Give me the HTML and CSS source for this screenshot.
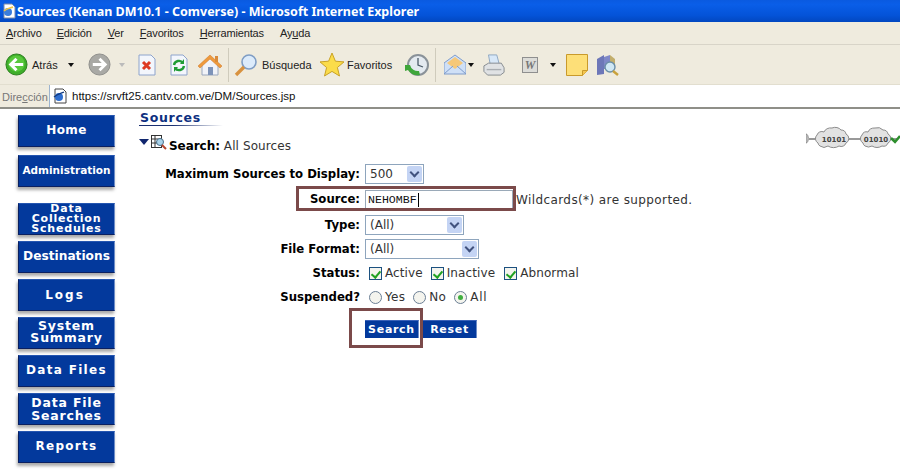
FILE: index.html
```html
<!DOCTYPE html>
<html lang="es">
<head>
<meta charset="utf-8">
<title>Sources (Kenan DM10.1 - Comverse) - Microsoft Internet Explorer</title>
<link rel="stylesheet" href="styles.css">
</head>
<body>
<header class="titlebar">
  <svg class="title-icon" viewBox="0 0 16 16" width="16" height="16"><path d="M3 1h8l3 3v11H3z" fill="#fff" stroke="#7d8ba8"/><circle cx="7" cy="9" r="4" fill="#3b7ddb"/><path d="M3 8c3-3 7-3 9-4" stroke="#f4c542" fill="none" stroke-width="1.4"/></svg>
  <span>Sources (Kenan DM10.1 - Comverse) - Microsoft Internet Explorer</span>
</header>
<nav class="menubar">
  <span class="menu m1"><u>A</u>rchivo</span>
  <span class="menu m2"><u>E</u>dición</span>
  <span class="menu"><u>V</u>er</span>
  <span class="menu"><u>F</u>avoritos</span>
  <span class="menu"><u>H</u>erramientas</span>
  <span class="menu">Ay<u>u</u>da</span>
</nav>
<div class="toolbar">
  <svg class="ti s23" viewBox="0 0 24 24"><circle cx="12" cy="12" r="11" fill="#3fae2a" stroke="#2a7d1c"/><circle cx="12" cy="11" r="8.5" fill="#58c83c"/><path d="M19 12H8M12 6l-6 6 6 6" fill="none" stroke="#fff" stroke-width="3.2"/></svg>
  <span class="tl l-back">Atrás</span>
  <i class="caret c-back"></i>
  <svg class="ti s23 fwd" viewBox="0 0 24 24"><circle cx="12" cy="12" r="11" fill="#a9a9a5" stroke="#8d8d8a"/><path d="M5 12h11M12 6l6 6-6 6" fill="none" stroke="#fff" stroke-width="3"/></svg>
  <i class="caret c-fwd"></i>
  <svg class="ti s20 stop" viewBox="0 0 20 22"><path d="M2 1h12l4 4v16H2z" fill="#f3f6fc" stroke="#8ea4cc"/><path d="M6 8l7 7M13 8l-7 7" stroke="#dd3a22" stroke-width="3"/></svg>
  <svg class="ti s20 refresh" viewBox="0 0 20 22"><path d="M2 1h12l4 4v16H2z" fill="#f3f6fc" stroke="#8ea4cc"/><path d="M5 11a5 5 0 0 1 9-2M15 12a5 5 0 0 1-9 2" fill="none" stroke="#1f9c35" stroke-width="2.4"/><path d="M15 5v5h-4zM5 18v-5h4z" fill="#1f9c35"/></svg>
  <svg class="ti s24 home" viewBox="0 0 24 24"><path d="M4 11v11h16V11L12 4z" fill="#f1f3f8" stroke="#9aa7bd"/><path d="M0 13L12 2l12 11-2 2L12 6 2 15z" fill="#ef9a3c" stroke="#c9762a" stroke-width=".5"/><rect x="10" y="14" width="5" height="8" fill="#7d93b8"/><rect x="17" y="3" width="3" height="6" fill="#d98a3a"/></svg>
  <i class="sep s1"></i>
  <svg class="ti s24 search" viewBox="0 0 24 24"><circle cx="15" cy="9" r="7" fill="#dcebfb" stroke="#7f9dc4" stroke-width="1.6"/><path d="M10 14L2 22" stroke="#d8923f" stroke-width="3.4"/></svg>
  <span class="tl l-search">Búsqueda</span>
  <svg class="ti s24 star" viewBox="0 0 24 24"><path d="M12 0l3.4 8.2 8.6.7-6.6 5.6 2.1 8.5L12 18.4 4.5 23l2.1-8.5L0 8.9l8.6-.7z" fill="#fbdc4a" stroke="#c9a227"/></svg>
  <span class="tl l-fav">Favoritos</span>
  <svg class="ti s24 hist" viewBox="0 0 24 24"><circle cx="13" cy="12" r="10" fill="#e4eaf0" stroke="#8a9299" stroke-width="2"/><path d="M13 5v7l5 2" fill="none" stroke="#4a5a68" stroke-width="1.3"/><path d="M0 12h5a8 8 0 0 0 9 6l1 4A12 12 0 0 1 3 17l-3 1z" fill="#3fa63a"/></svg>
  <i class="sep s2"></i>
  <svg class="ti s22 mail" viewBox="0 0 22 22"><path d="M0 9l11-8 11 8v11H0z" fill="#cfe0f7" stroke="#7e9cca"/><path d="M3 9l8-6 8 6-8 6z" fill="#f6c878"/><path d="M0 20l9-8M22 20l-9-8" stroke="#7e9cca"/></svg>
  <i class="caret c-mail"></i>
  <svg class="ti s22 print" viewBox="0 0 24 24"><path d="M6 1h9l3 11H8z" fill="#d8e8f8" stroke="#8aa3bf"/><path d="M1 13l5-3h14l3 5v5l-4 3H5l-4-4z" fill="#e0e2e4" stroke="#80858b"/><path d="M4 17h16" stroke="#a9adb2" stroke-width="1.5"/></svg>
  <span class="word">W</span>
  <i class="caret c-word"></i>
  <svg class="ti s22 note" viewBox="0 0 22 22"><path d="M.5.5h21v16l-5 5H.5z" fill="#fddf78" stroke="#c99a2c"/><path d="M16.5 21.5v-5h5" fill="#f4c650" stroke="#c99a2c"/></svg>
  <svg class="ti s22 research" viewBox="0 0 22 22"><path d="M0 5l7-4v19l-7 1z" fill="#6d77b8"/><path d="M7 3l6-2v14H7z" fill="#7f88c8"/><path d="M13 1l5 4v8h-5z" fill="#c2ae6c"/><circle cx="13" cy="13" r="5" fill="#cfe7f4" stroke="#6a8ea8" stroke-width="1.4"/><path d="M16 17l5 4" stroke="#c9a23c" stroke-width="2.4"/></svg>
</div>
<div class="addressbar">
  <span class="addr-label">Dire<u>c</u>ción</span>
  <div class="addr-field">
    <svg class="addr-icon" viewBox="0 0 16 16" width="16" height="16"><path d="M3 1h8l3 3v11H3z" fill="#fff" stroke="#444"/><circle cx="7" cy="9" r="4" fill="#2f6fd0"/><path d="M2 9c3-3 8-4 10-5" stroke="#123a80" fill="none" stroke-width="1.2"/></svg>
    <span>https://srvft25.cantv.com.ve/DM/Sources.jsp</span>
  </div>
</div>
<main class="page">
  <aside class="sidebar">
    <a class="nav n-home">Home</a>
    <a class="nav n-admin">Administration</a>
    <a class="nav triple">Data<br>Collection<br>Schedules</a>
    <a class="nav n-dest">Destinations</a>
    <a class="nav wide n-logs">Logs</a>
    <a class="nav double n-sys">System<br>Summary</a>
    <a class="nav wide">Data Files</a>
    <a class="nav double">Data File<br>Searches</a>
    <a class="nav wide">Reports</a>
  </aside>
  <section class="content">
    <h1 class="heading">Sources</h1>
    <div class="search-head">
      <i class="tri"></i>
      <svg class="search-icon" viewBox="0 0 17 17" width="17" height="17"><rect x="1.5" y="1.5" width="10" height="12" fill="#fff" stroke="#333"/><path d="M1.5 5h10M1.5 9h10M5 1.5v12" stroke="#333"/><circle cx="10" cy="8" r="3.5" fill="#a9d3ea" stroke="#4a6f8a"/><path d="M12 11l4 4" stroke="#b5452e" stroke-width="2"/></svg>
      <b>Search:</b><span>&nbsp;All Sources</span>
    </div>
    <form class="form">
      <label class="lbl">Maximum Sources to Display:</label>
      <div class="field"><span class="select w-max"><span>500</span><i class="sel-btn"></i></span></div>
      <label class="lbl">Source:</label>
      <div class="field"><span class="input">NEHOMBF<i class="cursor"></i></span><span class="hint">Wildcards(*) are supported.</span></div>
      <label class="lbl">Type:</label>
      <div class="field"><span class="select w-type"><span>(All)</span><i class="sel-btn"></i></span></div>
      <label class="lbl">File Format:</label>
      <div class="field"><span class="select w-fmt"><span>(All)</span><i class="sel-btn"></i></span></div>
      <label class="lbl">Status:</label>
      <div class="field opts">
        <span class="chk"></span><span class="opt o1">Active</span>
        <span class="chk"></span><span class="opt o2">Inactive</span>
        <span class="chk"></span><span class="opt">Abnormal</span>
      </div>
      <label class="lbl">Suspended?</label>
      <div class="field opts">
        <span class="rad"></span><span class="opt o3">Yes</span>
        <span class="rad"></span><span class="opt o4">No</span>
        <span class="rad on"></span><span class="opt o5">All</span>
      </div>
      <div></div>
      <div class="buttons"><a class="btn">Search</a><a class="btn">Reset</a></div>
    </form>
    <div class="hl hl-source"></div>
    <div class="hl hl-search"></div>
    <div class="clouds">
      <svg viewBox="0 0 94 26" width="94" height="26">
        <path d="M3 14h88" stroke="#777" stroke-width="1.5"/>
        <path d="M0 9c3 0 3 9 0 9z" fill="#ccc" stroke="#888"/>
        <path d="M12 18a5 5 0 0 1-1-8 5 5 0 0 1 7-3 7 6 0 0 1 8-4 7 6 0 0 1 9 2 5 5 0 0 1 5 4 5 5 0 0 1 0 9 5 5 0 0 1-7 3 8 6 0 0 1-11 0 6 5 0 0 1-8 0 4 4 0 0 1-2-3z" fill="#e2e2e2" stroke="#8c8c8c"/>
        <path d="M57 18a5 5 0 0 1-1-8 5 5 0 0 1 6-3 7 6 0 0 1 7-4 7 6 0 0 1 8 2 5 5 0 0 1 5 4 5 5 0 0 1 0 9 5 5 0 0 1-6 3 8 6 0 0 1-10 0 6 5 0 0 1-7 0 4 4 0 0 1-2-3z" fill="#e2e2e2" stroke="#8c8c8c"/>
        <path d="M85 13l4 4 5-6" fill="none" stroke="#2d8f2d" stroke-width="2.5"/>
        <text x="28" y="17" class="bits" text-anchor="middle">10101</text>
        <text x="70" y="17" class="bits" text-anchor="middle">01010</text>
      </svg>
    </div>
  </section>
</main>
</body>
</html>
```
FILE: styles.css
```css
* { box-sizing: border-box; }
html, body { margin: 0; padding: 0; }
body { width: 900px; height: 470px; overflow: hidden; background: #fff; font-family: "DejaVu Sans", sans-serif; color: #000; }

.titlebar { height: 22px; display: flex; align-items: center; padding-left: 1px; color: #fff; font: bold 12.5px "Noto Sans", sans-serif; background: linear-gradient(#0a5ae0 0, #0a5ee8 20%, #0453d8 70%, #0247c0 100%); }
.title-icon { flex: none; }

.menubar { height: 23px; display: flex; align-items: center; gap: 16px; padding-left: 6px; background: #efebde; border-bottom: 1px solid #d8d4c8; font: 11px "Liberation Sans", sans-serif; letter-spacing: -.15px; color: #222; }
.menu { display: block; }
.m2 { margin-left: -1px; }

.toolbar { height: 40px; display: flex; align-items: center; background: #efebde; border-bottom: 1px solid #e2decf; font: 11px "Liberation Sans", sans-serif; color: #222; }
.ti { flex: none; display: block; }
.s23 { width: 23px; height: 23px; }
.s24 { width: 24px; height: 24px; }
.s20 { width: 20px; height: 22px; }
.s22 { width: 22px; height: 22px; }
.toolbar > .ti:first-child { margin-left: 5px; }
.tl { flex: none; }
.caret { flex: none; width: 0; height: 0; border: 3px solid transparent; border-top: 4px solid #111; border-bottom: 0; }
.l-back { margin-left: 4px; width: 26px; }
.c-back { margin-left: 10px; }
.fwd { margin-left: 14px; }
.c-fwd { margin-left: 8px; border-top-color: #bbb; }
.stop { margin-left: 12px; }
.refresh { margin-left: 12px; }
.home { margin-left: 9px; }
.sep { flex: none; width: 1px; height: 34px; background: #cfcbbc; }
.s1 { margin-left: 6px; }
.search { margin-left: 5px; }
.l-search { margin-left: 4px; width: 48px; }
.star { margin-left: 10px; }
.l-fav { margin-left: 3px; width: 46px; }
.hist { margin-left: 12px; }
.s2 { margin-left: 6px; }
.mail { margin-left: 8px; }
.c-mail { margin-left: 2px; }
.print { margin-left: 9px; }
.word { flex: none; margin-left: 17px; width: 16px; height: 16px; border: 1px solid #8f8f8f; background: #dcdcd8; color: #777; font: italic bold 12px/14px "Liberation Serif", serif; text-align: center; }
.c-word { margin-left: 12px; }
.note { margin-left: 10px; }
.research { margin-left: 9px; }

.addressbar { height: 24px; display: flex; align-items: stretch; background: #efebde; border-bottom: 2px solid #8f8f88; font: 11px "Liberation Sans", sans-serif; }
.addr-label { width: 49px; padding-left: 2px; line-height: 24px; color: #777; }
.addr-field { flex: 1; display: flex; align-items: center; gap: 4px; padding-left: 2px; background: #fff; border-left: 1px solid #9db4cf; color: #111; font: 11.5px "Liberation Sans", sans-serif; }
.addr-icon { flex: none; }

.page { display: flex; position: relative; height: 361px; }
.sidebar { flex: none; width: 139px; padding: 6px 0 0 18px; display: flex; flex-direction: column; }
.nav { flex: none; height: 32px; width: 97px; margin-bottom: 6px; padding-bottom: 1px; display: flex; align-items: center; justify-content: center; text-align: center; color: #fff; font-weight: bold; font-size: 12px; line-height: 13px; background: #03399c; border: 1px solid; border-color: #2455b0 #6d8dc8 #0b2060 #0b2060; box-shadow: -1px 3px 3px #a9a9a9; }
.n-home { margin-bottom: 8px; padding-bottom: 2px; font-size: 12px; letter-spacing: .4px; }
.n-admin { margin-bottom: 16px; padding-bottom: 2px; font-size: 10.5px; }
.n-dest { font-size: 12.2px; }
.triple { line-height: 10px; font-size: 11px; letter-spacing: .8px; padding-bottom: 0; }
.double { line-height: 13px; font-size: 12.5px; letter-spacing: .8px; }
.n-sys { line-height: 12.5px; padding-bottom: 2px; }
.wide { font-size: 12px; letter-spacing: 1.3px; }
.n-logs { letter-spacing: 2px; padding: 0 3px 0 0; }

.content { flex: 1; min-width: 0; font-size: 12px; }
.heading { width: 84px; margin: 2px 0 0; padding: 0 0 1px 1px; color: #0d2f80; font-size: 12.5px; line-height: 14px; letter-spacing: .7px; background: linear-gradient(90deg, #1a2f70 40%, #fff) bottom/100% 1px no-repeat; }
.search-head { display: flex; align-items: center; height: 20px; margin-top: 8px; font-size: 12px; color: #333; }
.search-head b { color: #000; margin-top: 4px; letter-spacing: -.05px; }
.search-head span { margin-top: 4px; letter-spacing: .1px; }
.tri { flex: none; width: 0; height: 0; border: 5px solid transparent; border-top: 6px solid #10266e; border-bottom: 0; margin-right: 1px; margin-bottom: 4px; }
.search-icon { flex: none; margin-right: 2px; margin-bottom: 3px; }

.form { display: grid; grid-template-columns: 221px 1fr; grid-template-rows: 24px 27px 24px 24px 24px 24px 40px; align-items: center; margin-top: 8px; column-gap: 5px; }
.lbl { text-align: right; font-weight: bold; font-size: 11.7px; margin-top: -1px; }
.field { display: flex; align-items: center; color: #333; }
.select { display: flex; align-items: center; justify-content: space-between; height: 20px; padding: 0 1px 0 4px; background: #fff; border: 1px solid #8ea5bd; font-size: 12px; }
.w-max { width: 59px; }
.w-type { width: 99px; }
.w-fmt { width: 114px; }
.sel-btn { flex: none; position: relative; width: 15px; height: 16px; background: #c4d4f4; border-radius: 2px; }
.sel-btn::after { content: ""; position: absolute; left: 4px; top: 3px; width: 5px; height: 5px; border: solid #41527e; border-width: 0 2px 2px 0; transform: rotate(45deg); }
.input { display: flex; align-items: center; width: 148px; height: 20px; padding-left: 2px; border: 1px solid #9aa9b8; background: #fff; color: #111; font: 11.6px "Liberation Mono", monospace; }
.cursor { width: 1px; height: 14px; background: #000; margin-left: 1px; }
.hint { margin-left: 3px; font-size: 12px; letter-spacing: .4px; }
.opts { padding-left: 4px; }
.chk { flex: none; position: relative; width: 13px; height: 13px; border: 1px solid #1c5180; background: #f4f4ee; margin-right: 3px; }
.chk::after { content: ""; position: absolute; left: 3px; top: 1px; width: 4px; height: 7px; border: solid #21a121; border-width: 0 2px 2px 0; transform: rotate(40deg); }
.rad { flex: none; position: relative; width: 13px; height: 13px; border: 1px solid #6b7f95; border-radius: 50%; background: #f4f4ee; margin-right: 3px; }
.on::after { content: ""; position: absolute; left: 3px; top: 3px; width: 5px; height: 5px; border-radius: 50%; background: #3fae3f; }
.opt { font-size: 12px; letter-spacing: .1px; }
.o1 { margin-right: 8px; }
.o2 { margin-right: 9px; }
.o3 { margin-right: 8px; letter-spacing: .3px; }
.o4 { margin-right: 8px; letter-spacing: .3px; }
.o5 { letter-spacing: .8px; }
.buttons { display: flex; gap: 4px; align-self: start; margin-top: 11px; }
.btn { display: block; width: 54px; height: 18px; background: #03399c; color: #fff; font-weight: bold; font-size: 11px; line-height: 17px; text-align: center; letter-spacing: .7px; border-top: 1px solid #3a62b8; border-right: 1px solid #6d8dc8; }

.hl { position: absolute; border: 3px solid #7b4a4a; pointer-events: none; }
.hl-source { left: 296px; top: 77px; width: 220px; height: 25px; }
.hl-search { left: 349px; top: 199px; width: 74px; height: 40px; }
.clouds { position: absolute; left: 806px; top: 16px; line-height: 0; }
.bits { font: bold 7px "DejaVu Sans", sans-serif; fill: #444; }
```
